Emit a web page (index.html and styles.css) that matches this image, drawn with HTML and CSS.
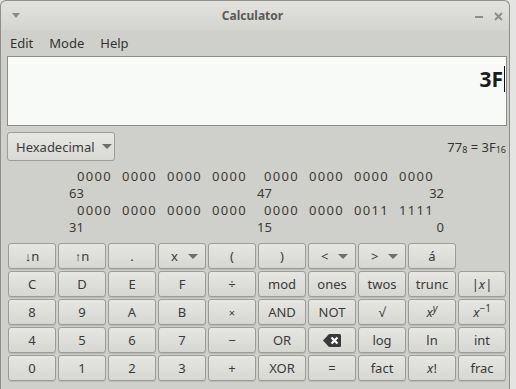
FILE: index.html
```html
<!DOCTYPE html>
<html lang="en">
<head>
    <meta charset="UTF-8">
    <title>Calculator</title>
    <link rel="stylesheet" href="styles.css">
</head>
<body>
    <div class="window">
        <div class="titlebar">
            <span class="win-menu">
                <svg width="8" height="5" viewBox="0 0 8 5"><path d="M0 0h8L4 5z" fill="#8a8a86"/></svg>
            </span>
            <span class="title">Calculator</span>
            <span class="win-controls">
                <svg width="9" height="9" viewBox="0 0 9 9"><rect x="0" y="4" width="8" height="2" fill="#8f8f8b"/></svg>
                <svg width="9" height="9" viewBox="0 0 9 9"><path d="M1 1l7 7M8 1l-7 7" stroke="#8f8f8b" stroke-width="2"/></svg>
            </span>
        </div>

        <div class="menubar">
            <span class="menu-item">Edit</span>
            <span class="menu-item">Mode</span>
            <span class="menu-item">Help</span>
        </div>

        <div class="content">
            <div class="display">
                <span class="value">3F</span><span class="cursor"></span>
            </div>

            <div class="toolbar">
                <div class="combo">Hexadecimal <span class="arrow"></span></div>
                <div class="conv">77<sub>8</sub> = 3F<sub>16</sub></div>
            </div>

            <div class="bits">
                <div class="bit-row">
                    <div class="half first"><span>0000</span><span>0000</span><span>0000</span><span>0000</span></div>
                    <div class="half second"><span>0000</span><span>0000</span><span>0000</span><span>0000</span></div>
                </div>
                <div class="bit-row labels">
                    <div class="half first"><span>63</span></div>
                    <div class="half second"><span>47</span><span>32</span></div>
                </div>
                <div class="bit-row">
                    <div class="half first"><span>0000</span><span>0000</span><span>0000</span><span>0000</span></div>
                    <div class="half second"><span>0000</span><span>0000</span><span>0011</span><span>1111</span></div>
                </div>
                <div class="bit-row labels">
                    <div class="half first"><span>31</span></div>
                    <div class="half second"><span>15</span><span>0</span></div>
                </div>
            </div>

            <div class="keys">
                <div class="key">&#8595;n</div>
                <div class="key">&#8593;n</div>
                <div class="key">.</div>
                <div class="key drop">x <span class="arrow"></span></div>
                <div class="key">(</div>
                <div class="key">)</div>
                <div class="key drop">&lt; <span class="arrow"></span></div>
                <div class="key drop">&gt; <span class="arrow"></span></div>
                <div class="key">á</div>
                <div class="blank"></div>

                <div class="key">C</div>
                <div class="key">D</div>
                <div class="key">E</div>
                <div class="key">F</div>
                <div class="key">÷</div>
                <div class="key">mod</div>
                <div class="key">ones</div>
                <div class="key">twos</div>
                <div class="key">trunc</div>
                <div class="key"><span>|<i>x</i>|</span></div>

                <div class="key">8</div>
                <div class="key">9</div>
                <div class="key">A</div>
                <div class="key">B</div>
                <div class="key small">×</div>
                <div class="key">AND</div>
                <div class="key">NOT</div>
                <div class="key">√</div>
                <div class="key"><span><i>x</i><sup><i>y</i></sup></span></div>
                <div class="key"><span><i>x</i><sup>−1</sup></span></div>

                <div class="key">4</div>
                <div class="key">5</div>
                <div class="key">6</div>
                <div class="key">7</div>
                <div class="key">−</div>
                <div class="key">OR</div>
                <div class="key">
                    <svg width="18" height="13" viewBox="0 0 18 13">
                        <path d="M6 0h10.5a1.5 1.5 0 0 1 1.5 1.5v10a1.5 1.5 0 0 1-1.5 1.5H6L0 6.5z" fill="#3a3a3a"/>
                        <path d="M8.5 3.5l6 6M14.5 3.5l-6 6" stroke="#fff" stroke-width="2.2"/>
                    </svg>
                </div>
                <div class="key">log</div>
                <div class="key">ln</div>
                <div class="key">int</div>

                <div class="key">0</div>
                <div class="key">1</div>
                <div class="key">2</div>
                <div class="key">3</div>
                <div class="key">+</div>
                <div class="key">XOR</div>
                <div class="key">=</div>
                <div class="key">fact</div>
                <div class="key"><span><i>x</i>!</span></div>
                <div class="key">frac</div>
            </div>
        </div>
    </div>
</body>
</html>
```

FILE: styles.css
```css
body {
    margin: 0;
    padding: 0;
    background-color: #e4e4e2;
    font-family: "Noto Sans", "Open Sans", sans-serif;
    color: #3a3a3a;
    overflow: hidden;
}
.window {
    width: 510px;
    height: 389px;
    box-sizing: border-box;
    background-color: #cfd0cb;
    border: 1px solid #8e8f8b;
    border-bottom: none;
    border-radius: 6px 6px 0 0;
}
.titlebar {
    height: 29px;
    display: flex;
    align-items: center;
    background: linear-gradient(#e2e2de, #d4d5d0);
    border-radius: 6px 6px 0 0;
}
.win-menu {
    width: 30px;
    padding-left: 11px;
    display: flex;
    align-items: center;
}
.title {
    flex-grow: 1;
    text-align: center;
    font-size: 12px;
    font-weight: bold;
    color: #5a5a58;
    padding-right: 4px;
}
.win-controls {
    display: flex;
    gap: 10px;
    padding-right: 6px;
    padding-left: 8px;
    padding-top: 2px;
}
.menubar {
    height: 26px;
    display: flex;
    align-items: center;
    padding-left: 1px;
    font-size: 13px;
    color: #333;
}
.menu-item {
    padding: 0 8px;
}
.content {
    padding: 0 2px 0 6px;
}
.display {
    height: 70px;
    box-sizing: border-box;
    background-color: #f8faf7;
    border: 1px solid #8b8c88;
    text-align: right;
    padding: 5px 1px 0 0;
    line-height: 30px;
}
.display .value {
    font-size: 21px;
    font-weight: bold;
    color: #1c1c1c;
    vertical-align: middle;
}
.display .cursor {
    display: inline-block;
    width: 1px;
    height: 26px;
    background-color: #111;
    vertical-align: middle;
    margin-left: 1px;
}
.toolbar {
    display: flex;
    justify-content: space-between;
    align-items: center;
    margin-top: 6px;
    height: 29px;
}
.combo {
    width: 108px;
    height: 29px;
    box-sizing: border-box;
    border: 1px solid #9d9e9a;
    border-radius: 3px;
    background: linear-gradient(#e6e6e3, #d9dad6);
    font-size: 13px;
    display: flex;
    align-items: center;
    padding-left: 8px;
    gap: 7px;
}
.arrow {
    display: inline-block;
    width: 0;
    height: 0;
    border-left: 5px solid transparent;
    border-right: 5px solid transparent;
    border-top: 5px solid #6e6e6c;
}
.conv {
    font-size: 13px;
    padding-right: 1px;
    color: #333;
}
.conv sub {
    font-size: 9px;
    vertical-align: -1px;
}
.bits {
    margin-top: 7px;
    padding-left: 62px;
    font-size: 13px;
    color: #3e3a36;
    height: 68px;
}
.bit-row {
    display: flex;
    height: 17px;
    line-height: 17px;
}
.half {
    width: 188px;
    display: flex;
    box-sizing: border-box;
}
.half.first {
    padding-left: 8px;
}
.half.second {
    width: 187px;
    padding-left: 7px;
}
.half span {
    width: 46px;
    letter-spacing: 1.3px;
}
.labels .half {
    padding-left: 0;
    justify-content: space-between;
}
.labels .half span {
    width: auto;
    letter-spacing: 0;
}
.keys {
    margin-top: 7px;
    padding-left: 1px;
    display: grid;
    grid-template-columns: repeat(10, 48px);
    grid-auto-rows: 26px;
    gap: 2px;
}
.key {
    box-sizing: border-box;
    border: 1px solid #9c9d99;
    border-radius: 3px;
    background: linear-gradient(#e6e6e3, #d6d7d3);
    box-shadow: 0 1px 0 #b8b9b5;
    font-size: 13px;
    display: flex;
    align-items: center;
    justify-content: center;
    color: #3a3a3a;
}
.key.drop {
    justify-content: flex-start;
    padding-left: 12px;
    gap: 10px;
}
.key.small {
    font-size: 11px;
}
.key sup {
    font-size: 10px;
    vertical-align: 5px;
    line-height: 0;
}
.key i {
    font-style: italic;
}
```
